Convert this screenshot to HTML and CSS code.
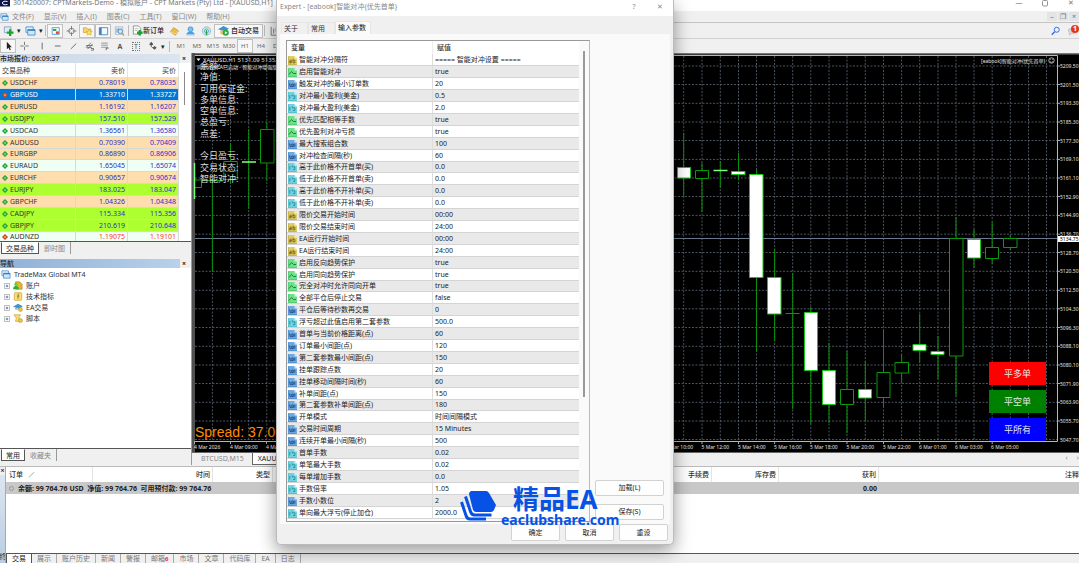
FILE: index.html
```html
<!DOCTYPE html>
<html lang="zh-CN">
<head>
<meta charset="utf-8">
<title>CPTMarkets-Demo - XAUUSD,H1</title>
<link rel="stylesheet" href="styles.css">
</head>
<body>
<svg class="defs" aria-hidden="true">
  <symbol id="i-ab" viewBox="0 0 9 9"><path d="M0 0h6.500l2.500 2.500V9H0z" fill="#e0cc62"/><path d="M6.500 0v2.500H9z" fill="#f8f0c0"/><path d="M.3.300v8.400h8.400" fill="none" stroke="#b39f3c" stroke-width=".6"/><path d="M1.500 4.200h1.800v2.600H1.600V5.500h1.700M5 2.700v4.100h1.900V4.400H5" fill="none" stroke="#6b5c14" stroke-width=".8"/></symbol>
  <symbol id="i-bo" viewBox="0 0 9 9"><path d="M0 0h6.500l2.500 2.500V9H0z" fill="#6fe08a"/><path d="M6.500 0v2.500H9z" fill="#d3f8dc"/><path d="M.3.300v8.400h8.400" fill="none" stroke="#41b862" stroke-width=".6"/><path d="M1 6.500l2.500-3L5.500 5.500h2.500" fill="none" stroke="#0f7a33" stroke-width=".9"/></symbol>
  <symbol id="i-in" viewBox="0 0 9 9"><path d="M0 0h6.500l2.500 2.500V9H0z" fill="#6ea9e0"/><path d="M6.500 0v2.500H9z" fill="#d0e4f8"/><path d="M.3.300v8.400h8.400" fill="none" stroke="#3f7cba" stroke-width=".6"/><path d="M1 4h1v2.600h1.400M3.800 4h1.500v2.600H3.800zM6.800 3.600v3.200" fill="none" stroke="#163f7c" stroke-width=".8"/></symbol>
  <symbol id="i-db" viewBox="0 0 9 9"><path d="M0 0h6.500l2.500 2.500V9H0z" fill="#70d3e0"/><path d="M6.500 0v2.500H9z" fill="#d0f4f8"/><path d="M.3.300v8.400h8.400" fill="none" stroke="#44aebd" stroke-width=".6"/><path d="M1.800 3v3.500M3.600 3h1.200v1.500M5 6.500h1.800V3.800H5.500" fill="none" stroke="#1b7885" stroke-width=".7"/></symbol>
  <symbol id="i-up" viewBox="0 0 6 6"><path d="M3 0l3 3-3 3-3-3z" fill="#1e9a34"/><path d="M3 1.500l1.500 1.500L3 4.500 1.500 3z" fill="#6fdc7c"/></symbol>
  <symbol id="i-dn" viewBox="0 0 6 6"><path d="M3 0l3 3-3 3-3-3z" fill="#c8401c"/><path d="M3 1.500l1.500 1.500L3 4.500 1.500 3z" fill="#ff8a5c"/></symbol>
  <symbol id="i-wins" viewBox="0 0 12 11"><path d="M1 1h8v6H1z" fill="#e4f2fd" stroke="#4b93d2"/><path d="M3 4h8v6H3z" fill="#cfe7fa" stroke="#4b93d2"/><path d="M3 4.500h8" stroke="#2f78ba" stroke-width="1.500"/></symbol>
  <symbol id="i-plus" viewBox="0 0 7 7"><path d="M.5.500h6v6h-6z" fill="#fff" stroke="#9a9a9a" stroke-width=".8"/><path d="M2 3.500h3M3.500 2v3" stroke="#345c9c" stroke-width=".9"/></symbol>
</svg>

<header class="titlebar">
  <svg class="app-icon" viewBox="0 0 10 7"><path d="M0 0h10v6.500H0z" fill="#0c1448"/><path d="M7.500 1.500q-5-1-5 1.500t5 1.500" fill="none" stroke="#fff" stroke-width="1"/></svg>
  <span class="title-text">301420007: CPTMarkets-Demo - 模拟账户 - CPT Markets (Pty) Ltd - [XAUUSD,H1]</span>
  <span class="win-controls"><button aria-label="最小化">—</button><button aria-label="最大化"><svg viewBox="0 0 8 8"><rect x="1.500" y=".5" width="5" height="5.500" rx="1" fill="none" stroke="#888" stroke-width=".9"/></svg></button><button aria-label="关闭">✕</button></span>
</header>
<nav class="menubar">
  <svg class="menu-icon"><use href="#i-wins"/></svg>
  <button>文件(F)</button><button>显示(V)</button><button>插入(I)</button><button>图表(C)</button><button>工具(T)</button><button>窗口(W)</button><button>帮助(H)</button>
  <span class="mdi"><button aria-label="最小化子窗口">–</button><button aria-label="还原子窗口">❐</button><button aria-label="关闭子窗口">×</button></span>
</nav>
<div class="toolbar">
  <button class="tool" aria-label="新建图表"><svg viewBox="0 0 12 12"><path d="M1 1h8v7H1z" fill="#dcebf8" stroke="#6d8eab" stroke-width=".8"/><path d="M4 8h8M8 4v8" stroke="#14a52c" stroke-width="2.800"/></svg></button><span class="caret">▾</span>
  <button class="tool" aria-label="配置"><svg><use href="#i-wins"/></svg></button><span class="caret">▾</span><i class="sep"></i>
  <button class="tool on" aria-label="市场报价"><svg viewBox="0 0 12 12"><path d="M2 2h8.500v8H2z" fill="#fff" stroke="#4a90d0"/><path d="M3 3.500h4v2.500H3z" fill="#25ae46"/><path d="M6.500 6.500H10v3H6.500z" fill="#e0492c"/></svg></button>
  <button class="tool" aria-label="十字"><svg viewBox="0 0 12 12"><circle cx="6" cy="6" r="3.300" fill="none" stroke="#707070"/><path d="M6 0v4.500M6 7.500V12M0 6h4.500M7.500 6H12" stroke="#707070"/></svg></button>
  <button class="tool on" aria-label="导航"><svg viewBox="0 0 12 12"><path d="M1 2h4l1 1.500h4V8H1z" fill="#f3d56b" stroke="#c7982c" stroke-width=".7"/><path d="M8 4l1.200 2.300 2.600.300-1.900 1.800.5 2.600L8 9.800 5.700 11l.5-2.600L4.300 6.600l2.600-.3z" fill="#ffe45e" stroke="#c7982c" stroke-width=".6"/></svg></button>
  <button class="tool on" aria-label="终端"><svg viewBox="0 0 12 12"><path d="M1 2h10v8.500H1z" fill="#f2f9ff" stroke="#3d7dbb"/><path d="M1 2h2.800v8.500H1z" fill="#3d7dbb"/></svg></button>
  <button class="tool" aria-label="策略测试"><svg viewBox="0 0 12 12"><path d="M1 1h9v9H1z" fill="#e8eef4" stroke="#95a9bc" stroke-width=".8"/><path d="M3 3v5M5 2.500V7M8 3v3" stroke="#5a7da0"/><circle cx="7" cy="6.500" r="2.600" fill="#cfe8fa" stroke="#4a88bc"/><path d="M9 8.500l2.500 3" stroke="#c99b33" stroke-width="1.400"/></svg></button><i class="sep"></i>
  <button class="wide"><svg viewBox="0 0 12 12"><path d="M1.500 1h5.500l2.500 2.500V10h-8z" fill="#fff" stroke="#777" stroke-width=".8"/><path d="M3 4h4M3 6h3" stroke="#999" stroke-width=".7"/><path d="M5.500 8.500h6M8.500 5.500v6" stroke="#14a52c" stroke-width="2.600"/></svg>新订单</button>
  <button class="tool" aria-label="MetaEditor"><svg viewBox="0 0 12 12"><path d="M1 7l4-5 6 4-4 5z" fill="#f2bd3d" stroke="#a8731a" stroke-width=".7"/><path d="M1 7l6 2.500L11 6" fill="none" stroke="#fff0b8" stroke-width=".8"/></svg></button>
  <button class="tool" aria-label="VPS"><svg viewBox="0 0 12 12"><circle cx="6" cy="4" r="3" fill="#7ac0f2" stroke="#2c78b8" stroke-width=".7"/><path d="M1 11q0-4 5-4t5 4z" fill="#4d9edf"/><path d="M1 10.500h10" stroke="#d4e9f8"/></svg></button>
  <button class="tool" aria-label="信号"><svg viewBox="0 0 12 12"><circle cx="6" cy="6" r="5" fill="#d4ebdf" stroke="#88b5d4"/><circle cx="6" cy="6" r="2.500" fill="none" stroke="#56a4c6"/><path d="M6 5v6" stroke="#21a04b" stroke-width="1.500"/></svg></button>
  <button class="wide on"><svg viewBox="0 0 12 12"><path d="M0 4.500L6 1l6 3-5 3z" fill="#3f94cc"/><path d="M2.500 6v3.500q3 2 6 0V6z" fill="#e7c565"/><circle cx="8.500" cy="8.500" r="3.300" fill="#23ac3c"/><path d="M7.500 6.800v3.400l3-1.700z" fill="#fff"/></svg>自动交易</button><i class="sep"></i>
  <button class="tool" aria-label="柱状图"><svg viewBox="0 0 12 12"><path d="M2 1v10h9M5 3v6M8 2v5" fill="none" stroke="#666"/></svg></button>
  <span class="right-tools">
    <button class="tool" aria-label="搜索"><svg viewBox="0 0 12 12"><circle cx="7.500" cy="4.500" r="3" fill="#e8f1ff" stroke="#3d6ddb" stroke-width="1.200"/><path d="M5 7L1.500 10.500" stroke="#3d6ddb" stroke-width="1.800"/></svg></button>
    <button class="tool chat" aria-label="通知"><svg viewBox="0 0 12 12"><path d="M1 4q5-3 9 0v4q-3 2-5 1l-3 2 .5-2.500Q1 8 1 4z" fill="#d8d8d8" stroke="#aaa" stroke-width=".6"/></svg><b class="badge">1</b></button>
  </span>
</div>
<div class="toolbar second">
  <button class="tool on" aria-label="光标"><svg viewBox="0 0 12 12"><path d="M4 1v9l2-2 1.500 3.200 1.300-.7L7.400 7.500H10z" fill="#222"/></svg></button>
  <button class="tool" aria-label="十字线"><svg viewBox="0 0 12 12"><path d="M6 1v4M6 7v4M1 6h4M7 6h4" stroke="#666"/></svg></button>
  <button class="tool" aria-label="垂直线"><svg viewBox="0 0 12 12"><path d="M8 2v8" stroke="#555"/></svg></button>
  <button class="tool" aria-label="水平线"><svg viewBox="0 0 12 12"><path d="M4 6h7" stroke="#555"/></svg></button>
  <button class="tool" aria-label="趋势线"><svg viewBox="0 0 12 12"><path d="M4 9.500L10.500 3" stroke="#555"/></svg></button>
  <button class="tool" aria-label="通道"><svg viewBox="0 0 12 12"><path d="M3 8l6-6M5 9.500l6-6M3 5.500h8M4 8h6M9 9h3v2H9" fill="none" stroke="#555" stroke-width=".9"/></svg></button>
  <button class="tool" aria-label="斐波那契"><svg viewBox="0 0 12 12"><path d="M2 2.500h8M2 5h8M2 7.500h8" stroke="#888"/><path d="M8 11V8.500h3" fill="none" stroke="#555"/></svg></button>
  <button class="tool letter">A</button>
  <button class="tool letter"><span class="boxed">T</span></button>
  <button class="tool" aria-label="箭头"><svg viewBox="0 0 12 12"><path d="M2 4l2.500-3L7 4 4.500 6zM6 8l2.500-2L11 8 8.500 10.500z" fill="#555"/><path d="M4 6l3 3" stroke="#555"/></svg></button><span class="caret">▾</span><i class="sep"></i>
  <button class="tool tf">M1</button><button class="tool tf">M5</button><button class="tool tf">M15</button><button class="tool tf">M30</button><button class="tool tf on">H1</button><button class="tool tf">H4</button><button class="tool tf">D1</button>
</div>

<main class="workspace">
  <aside class="dock">
    <section class="market">
      <h2 class="panel-title"><span>市场报价: 06:09:37</span><button aria-label="关闭市场报价">×</button></h2>
      <div class="quotes-wrap">
      <table class="quotes">
        <thead><tr><th>交易品种</th><th>卖价</th><th>买价</th></tr></thead>
        <tbody>
        <tr class="peach"><td><svg><use href="#i-up"/></svg>USDCHF</td><td>0.78019</td><td>0.78035</td></tr>
        <tr class="sel"><td><svg><use href="#i-dn"/></svg>GBPUSD</td><td>1.33710</td><td>1.33727</td></tr>
        <tr class="peach"><td><svg><use href="#i-up"/></svg>EURUSD</td><td>1.16192</td><td>1.16207</td></tr>
        <tr class="lime"><td><svg><use href="#i-up"/></svg>USDJPY</td><td>157.510</td><td>157.529</td></tr>
        <tr class="mint"><td><svg><use href="#i-up"/></svg>USDCAD</td><td>1.36561</td><td>1.36580</td></tr>
        <tr class="peach"><td><svg><use href="#i-up"/></svg>AUDUSD</td><td>0.70390</td><td>0.70409</td></tr>
        <tr class="peach"><td><svg><use href="#i-up"/></svg>EURGBP</td><td>0.86890</td><td>0.86906</td></tr>
        <tr class="mint"><td><svg><use href="#i-up"/></svg>EURAUD</td><td>1.65045</td><td>1.65074</td></tr>
        <tr class="peach"><td><svg><use href="#i-up"/></svg>EURCHF</td><td>0.90657</td><td>0.90674</td></tr>
        <tr class="lime"><td><svg><use href="#i-up"/></svg>EURJPY</td><td>183.025</td><td>183.047</td></tr>
        <tr class="peach"><td><svg><use href="#i-up"/></svg>GBPCHF</td><td>1.04326</td><td>1.04348</td></tr>
        <tr class="lime"><td><svg><use href="#i-up"/></svg>CADJPY</td><td>115.334</td><td>115.356</td></tr>
        <tr class="lime"><td><svg><use href="#i-up"/></svg>GBPJPY</td><td>210.619</td><td>210.648</td></tr>
        <tr class="mint down"><td><svg><use href="#i-dn"/></svg>AUDNZD</td><td>1.19075</td><td>1.19101</td></tr>
        </tbody>
      </table>
      <i class="thumb"></i>
      </div>
      <div class="dock-tabs"><button class="active">交易品种</button><button>即时图</button></div>
    </section>
    <section class="navigator">
      <h2 class="panel-title blue"><span>导航</span><button aria-label="关闭导航">×</button></h2>
      <ul class="tree">
        <li class="root"><svg class="ic"><use href="#i-wins"/></svg>TradeMax Global MT4</li>
        <li><svg class="ex"><use href="#i-plus"/></svg><svg class="ic" viewBox="0 0 12 11"><path d="M3 1h5l3 3v6H3z" fill="#e5b92f" stroke="#a07a12" stroke-width=".7"/><circle cx="3.500" cy="4" r="2" fill="#5ed04c"/><path d="M0 10q0-4 3.500-4T7 10z" fill="#2fae32"/></svg>账户</li>
        <li><svg class="ex"><use href="#i-plus"/></svg><svg class="ic" viewBox="0 0 12 11"><rect x="1.500" y=".8" width="9" height="9.400" rx="1" fill="#f7df74" stroke="#c79d2a" stroke-width=".8"/><path d="M7.500 2.500q-1.500-.5-1.500 1.500v4.500M4.800 5h3" fill="none" stroke="#7a5c10" stroke-width=".8"/></svg>技术指标</li>
        <li><svg class="ex"><use href="#i-plus"/></svg><svg class="ic" viewBox="0 0 12 11"><path d="M0 4.500L6 1l6 3-5 3z" fill="#3f94cc"/><path d="M2.500 5.500v2q2 1.500 4 0z" fill="#78bbe6"/><circle cx="9" cy="8" r="2.400" fill="#f0c63e" stroke="#a87e1a" stroke-width=".6"/></svg>EA交易</li>
        <li><svg class="ex"><use href="#i-plus"/></svg><svg class="ic" viewBox="0 0 12 11"><path d="M1 1h8l-2 4 3 4H3l1-4z" fill="#f7df74" stroke="#c79d2a" stroke-width=".8"/><circle cx="9" cy="8" r="2.400" fill="#f0c63e" stroke="#a87e1a" stroke-width=".6"/></svg>脚本</li>
      </ul>
      <div class="dock-tabs"><button class="active">常用</button><button>收藏夹</button></div>
    </section>
  </aside>

  <section class="chart-area">
    <div class="chart">
      <svg class="plot" viewBox="192 53 887 400" preserveAspectRatio="xMinYMin slice">
        <path d="M192 53h887v400H192z" fill="#000"/>
        <path d="M192 53h3v400h-3z" fill="#505050"/><path d="M195 53h884v1.500H195z" fill="#777"/>
        <g stroke="#5d6a78" stroke-width=".8" stroke-dasharray="2 1.500">
          <path d="M212.400 56v385M230.500 56v385M248.700 56v385M266.800 56v385M683.700 56v385M702 56v385M720.300 56v385M738.500 56v385M756.500 56v385M774.600 56v385M792.700 56v385M810.800 56v385M829 56v385M847 56v385M865.300 56v385M883.500 56v385M901.600 56v385M919.700 56v385M938 56v385M956 56v385M974 56v385M992.200 56v385M1010.300 56v385M1028.500 56v385M1046.500 56v385"/>
          <path d="M195 66h862M195 84.500h862M195 103.300h862M195 122h862M195 140.500h862M195 159.400h862M195 178h862M195 196.500h862M195 215.400h862M195 234.200h862M195 252.500h862M195 271.300h862M195 290.300h862M195 308.800h862M195 327.500h862M195 346.300h862M195 365h862M195 383.500h862M195 402.300h862M195 421h862M195 439.500h862"/>
        </g>
        <path d="M195 238.500h862" stroke="#6a7a8c"/>
        <path d="M195 55.500h862.500v386M195 441.500h862.500" fill="none" stroke="#b8b8b8"/>
        <path d="M230.500 441v3M266.500 441v3M194.500 441v3M702 441v3M738.500 441v3M774.600 441v3M810.800 441v3M847 441v3M883.500 441v3M919.700 441v3M956 441v3M992.200 441v3M1057 66h3M1057 84.500h3M1057 103.300h3M1057 122h3M1057 140.500h3M1057 159.400h3M1057 178h3M1057 196.500h3M1057 215.400h3M1057 234.200h3M1057 252.500h3M1057 271.300h3M1057 290.300h3M1057 308.800h3M1057 327.500h3M1057 346.300h3M1057 365h3M1057 383.500h3M1057 402.300h3M1057 421h3" stroke="#aaa"/>
        <path class="wick" d="M212.400 180v92M230.500 143v40M248.700 129v80M266.800 122v59M683.700 133v63M702 163v49M720.300 161v27M738.500 153v26M756.500 170v182M774.600 249v92M792.700 273v136M810.800 307v117M829 343v80M847 351v82M865.300 361v60M883.500 331v76M901.600 354v29M919.700 314v49M938 336v43M956 217v179M974 229v39M992.200 222v42M1010.300 235v15"/>
        <g class="hollow">
          <path d="M195 180h6.500v7.500H195M201.500 180.500h22M223.800 161.500h13.500v18h-13.500zM260.500 129.500h13.500v33.500h-13.500zM695.500 170.500h13v8h-13zM840.500 389.500h13v15h-13zM877 372.500h13v25h-13zM895 362.500h13.500v10.500H895zM949.500 238.500H963v117.500h-13.500zM985.500 247.500h13v11h-13zM1003.500 238.500H1017v9h-13.500zM785.500 313.500h14"/>
        </g>
        <path d="M194.500 163v36M242 162h14M713.500 170.500h14" stroke="#7dff7d" stroke-width="1.500"/>
        <g class="solid">
          <path d="M677.500 167.500h13v10.500h-13zM731.500 171.500H745v3h-13.500zM749.500 174.500H763v103h-13.500zM767.500 277.500H781v36.500h-13.500zM804.500 312.500h13v58h-13zM822.500 370.500h13v34h-13zM858.500 389.500h13v8.500h-13zM913 344.500h13v6H913zM931 351.500h13v3h-13zM967.500 239.500h13v18.500h-13z"/>
        </g>
        <path d="M196.500 58.500h4l-2 2.500z" fill="#fff"/>
        <g class="tiny">
          <text x="203" y="61.500" class="t6">XAUUSD,H1 5131.09 5135.57</text>
          <text x="197" y="69">同时对冲EA已启动 - 智能对冲增强版</text>
          <text x="981" y="62.500">[eabook]智能对冲{优先首单}</text>
        </g>
        <circle cx="1051.500" cy="60.500" r="2.700" fill="none" stroke="#ddd" stroke-width=".8"/><path d="M1050 61.500q1.500 1.500 3 0M1050.300 59.500h.8M1052 59.500h.8" fill="none" stroke="#ddd" stroke-width=".6"/>
        <g class="info">
          <text x="200" y="69">余额:</text><text x="200" y="80">净值:</text><text x="200" y="92">可用保证金:</text><text x="200" y="103">多单信息:</text><text x="200" y="114">空单信息:</text><text x="200" y="125">总盈亏:</text><text x="200" y="137">点差:</text><text x="200" y="159">今日盈亏:</text><text x="200" y="171">交易状态:</text><text x="200" y="182">智能对冲:</text>
        </g>
        <text x="195" y="437" class="spread">Spread: 37.00</text>
        <g class="tiny">
          <text x="194" y="448.500">4 Mar 2026</text><text x="230" y="448.500">4 Mar 09:00</text><text x="266" y="448.500">4 Mar 11:00</text><text x="665.500" y="448.500">5 Mar 10:00</text><text x="701.500" y="448.500">5 Mar 12:00</text><text x="738" y="448.500">5 Mar 14:00</text><text x="774" y="448.500">5 Mar 16:00</text><text x="810" y="448.500">5 Mar 18:00</text><text x="846.500" y="448.500">5 Mar 20:00</text><text x="883" y="448.500">5 Mar 22:00</text><text x="919" y="448.500">6 Mar 01:00</text><text x="955" y="448.500">6 Mar 03:00</text><text x="991" y="448.500">6 Mar 05:00</text>
          <text x="1060" y="68">5209.50</text><text x="1060" y="86.500">5201.50</text><text x="1060" y="105">5193.30</text><text x="1060" y="124">5185.30</text><text x="1060" y="142.500">5177.30</text><text x="1060" y="161">5169.10</text><text x="1060" y="180">5161.10</text><text x="1060" y="198.500">5152.90</text><text x="1060" y="217">5144.90</text><text x="1060" y="236">5136.70</text><text x="1060" y="254.500">5128.70</text><text x="1060" y="273">5120.50</text><text x="1060" y="292">5112.50</text><text x="1060" y="310.500">5104.30</text><text x="1060" y="329.500">5096.30</text><text x="1060" y="348">5088.10</text><text x="1060" y="367">5080.10</text><text x="1060" y="385.500">5071.90</text><text x="1060" y="404">5063.90</text><text x="1060" y="423">5055.70</text><text x="1060" y="441.500">5047.70</text>
        </g>
        <path d="M1058 236h21v6h-21z" fill="#fff"/><text x="1060" y="241" class="price">5134.75</text>
      </svg>
      <div class="close-buttons"><button class="red">平多单</button><button class="green">平空单</button><button class="navy">平所有</button></div>
    </div>
    <div class="chart-tabs"><button>BTCUSD,M15</button><button class="active">XAUUSD,H1</button><span class="scroll">‹ &#160; &#160; ›</span></div>
  </section>
</main>

<section class="terminal">
  <div class="strip"><button aria-label="关闭终端">×</button><i>终端</i></div>
  <div class="terminal-body">
    <table class="orders">
      <colgroup><col class="c1"><col class="c2"><col class="c3"><col class="c4"><col class="c5"><col class="c6"><col class="c7"></colgroup>
      <thead><tr><th class="l">订单 &#160; <small>∕</small></th><th>时间</th><th>类型</th><th>手续费</th><th>库存费</th><th>获利</th><th>注释</th></tr></thead>
      <tbody><tr><td colspan="5" class="l"><i class="dot"></i>余额: 99 764.76 USD&#160; 净值: 99 764.76&#160; 可用预付款: 99 764.76</td><td>0.00</td><td></td></tr></tbody>
    </table>
    <div class="term-tabs"><button class="active">交易</button><button>展示</button><button>账户历史</button><button>新闻</button><button>警报</button><button>邮箱<sub>6</sub></button><button>市场</button><button>文章</button><button>代码库</button><button>EA</button><button>日志</button></div>
  </div>
</section>

<div class="dialog" role="dialog" aria-labelledby="dlg-title">
  <header class="dlg-head"><span id="dlg-title">Expert - [eabook]智能对冲{优先首单}</span><span class="dlg-controls"><button aria-label="帮助">?</button><button aria-label="关闭">✕</button></span></header>
  <div class="dlg-tabs"><button>关于</button><button>常用</button><button class="active">输入参数</button></div>
  <div class="dlg-page">
    <div class="list-box">
      <table class="params">
        <thead><tr><th>变量</th><th>赋值</th></tr></thead>
        <tbody>
        <tr><td><svg><use href="#i-ab"/></svg>智能对冲分隔符</td><td>===== 智能对冲设置 =====</td></tr>
        <tr><td><svg><use href="#i-bo"/></svg>启用智能对冲</td><td>true</td></tr>
        <tr><td><svg><use href="#i-in"/></svg>触发对冲的最小订单数</td><td>20</td></tr>
        <tr><td><svg><use href="#i-db"/></svg>对冲最小盈利(美金)</td><td>0.5</td></tr>
        <tr><td><svg><use href="#i-db"/></svg>对冲最大盈利(美金)</td><td>2.0</td></tr>
        <tr><td><svg><use href="#i-bo"/></svg>优先匹配相等手数</td><td>true</td></tr>
        <tr><td><svg><use href="#i-bo"/></svg>优先盈利对冲亏损</td><td>true</td></tr>
        <tr><td><svg><use href="#i-in"/></svg>最大搜索组合数</td><td>100</td></tr>
        <tr><td><svg><use href="#i-in"/></svg>对冲检查间隔(秒)</td><td>60</td></tr>
        <tr><td><svg><use href="#i-db"/></svg>高于此价格不开首单(买)</td><td>0.0</td></tr>
        <tr><td><svg><use href="#i-db"/></svg>低于此价格不开首单(卖)</td><td>0.0</td></tr>
        <tr><td><svg><use href="#i-db"/></svg>高于此价格不开补单(买)</td><td>0.0</td></tr>
        <tr><td><svg><use href="#i-db"/></svg>低于此价格不开补单(卖)</td><td>0.0</td></tr>
        <tr><td><svg><use href="#i-ab"/></svg>限价交易开始时间</td><td>00:00</td></tr>
        <tr><td><svg><use href="#i-ab"/></svg>限价交易结束时间</td><td>24:00</td></tr>
        <tr><td><svg><use href="#i-ab"/></svg>EA运行开始时间</td><td>00:00</td></tr>
        <tr><td><svg><use href="#i-ab"/></svg>EA运行结束时间</td><td>24:00</td></tr>
        <tr><td><svg><use href="#i-bo"/></svg>启用反向趋势保护</td><td>true</td></tr>
        <tr><td><svg><use href="#i-bo"/></svg>启用同向趋势保护</td><td>true</td></tr>
        <tr><td><svg><use href="#i-bo"/></svg>完全对冲时允许同向开单</td><td>true</td></tr>
        <tr><td><svg><use href="#i-bo"/></svg>全部平仓后停止交易</td><td>false</td></tr>
        <tr><td><svg><use href="#i-in"/></svg>平仓后等待秒数再交易</td><td>0</td></tr>
        <tr><td><svg><use href="#i-db"/></svg>浮亏超过此值启用第二套参数</td><td>500.0</td></tr>
        <tr><td><svg><use href="#i-in"/></svg>首单与当前价格距离(点)</td><td>60</td></tr>
        <tr><td><svg><use href="#i-in"/></svg>订单最小间距(点)</td><td>120</td></tr>
        <tr><td><svg><use href="#i-in"/></svg>第二套参数最小间距(点)</td><td>150</td></tr>
        <tr><td><svg><use href="#i-in"/></svg>挂单跟踪点数</td><td>20</td></tr>
        <tr><td><svg><use href="#i-in"/></svg>挂单移动间隔时间(秒)</td><td>60</td></tr>
        <tr><td><svg><use href="#i-in"/></svg>补单间距(点)</td><td>150</td></tr>
        <tr><td><svg><use href="#i-in"/></svg>第二套参数补单间距(点)</td><td>180</td></tr>
        <tr><td><svg><use href="#i-in"/></svg>开单模式</td><td>时间间隔模式</td></tr>
        <tr><td><svg><use href="#i-in"/></svg>交易时间周期</td><td>15 Minutes</td></tr>
        <tr><td><svg><use href="#i-in"/></svg>连续开单最小间隔(秒)</td><td>500</td></tr>
        <tr><td><svg><use href="#i-db"/></svg>首单手数</td><td>0.02</td></tr>
        <tr><td><svg><use href="#i-db"/></svg>单笔最大手数</td><td>0.02</td></tr>
        <tr><td><svg><use href="#i-db"/></svg>每单增加手数</td><td>0.0</td></tr>
        <tr><td><svg><use href="#i-db"/></svg>手数倍率</td><td>1.05</td></tr>
        <tr><td><svg><use href="#i-in"/></svg>手数小数位</td><td>2</td></tr>
        <tr><td><svg><use href="#i-db"/></svg>单向最大浮亏(停止加仓)</td><td>2000.0</td></tr>
        </tbody>
      </table>
      <i class="thumb"></i>
    </div>
    <div class="side"><button class="btn">加载(L)</button><button class="btn">保存(S)</button></div>
  </div>
  <footer class="dlg-foot"><button class="btn">确定</button><button class="btn">取消</button><button class="btn">重设</button></footer>
  <div class="watermark">
    <svg viewBox="0 0 36 31"><path d="M11 1h15q2 0 3 2l7 12-2 5q-1 2-3 2H16q-2 0-3-2L9 4q0-2 2-3z" fill="#0752e4"/><path d="M5.500 6.500l5 15q1 3.500 4 3.500h17M1.500 12l4.500 13.500q1 3.500 4 3.500h16" fill="none" stroke="#0752e4" stroke-width="3"/></svg>
    <div><strong>精品EA</strong><em>eaclubshare.com</em></div>
  </div>
</div>
</body>
</html>
```
FILE: styles.css
```css
* { box-sizing: border-box; }
html, body { margin: 0; height: 100%; }
body {
  display: flex; flex-direction: column; overflow: hidden;
  min-height: 100vh; background: #f0f0f0; color: #333;
  font: 7px/11px "Noto Sans", "Noto Sans CJK SC", sans-serif;
  position: relative;
}
button { font: inherit; color: inherit; border: 0; background: none; padding: 0; margin: 0; white-space: nowrap; }
svg { display: block; flex: none; }
.defs { position: absolute; width: 0; height: 0; }

/* Title and menu */
.titlebar { display: flex; flex: 0 0 11px; background: #fff; color: #777; line-height: 5px; }
.app-icon { width: 10px; height: 7px; margin-right: 3px; }
.title-text { white-space: nowrap; }
.win-controls { margin-left: auto; display: flex; align-items: flex-start; gap: 12px; padding-right: 1px; }
.win-controls button { width: 14px; }
.win-controls svg { width: 8px; height: 8px; margin: 0 auto; }
.menubar { display: flex; flex: 0 0 12px; align-items: center; gap: 10px; border-bottom: 1px solid #c4c4c4; color: #8a8a8a; }
.menu-icon { width: 9px; height: 8px; margin-right: -7px; }
.mdi { margin-left: auto; display: flex; gap: 1px; color: #5b7290; }
.mdi button { width: 10px; background: #e4e4e4; line-height: 9px; }

/* Toolbars */
.toolbar { display: flex; flex: 0 0 16px; align-items: center; border-bottom: 1px solid #d2d2d2; }
.toolbar.second { flex-basis: 14px; border-bottom: 0; }
.tool { width: 16px; height: 14px; display: flex; align-items: center; justify-content: center; border: 1px solid transparent; }
.tool svg { width: 11px; height: 10px; }
.toolbar .on { border: 1px solid #c0c0c0; background: #f8f8f8; }
.caret { width: 6px; text-align: center; color: #222; }
.sep { width: 1px; height: 11px; background: #bbb; margin: 0 1px; }
.second .sep { margin: 0 3px; }
.wide { display: flex; align-items: center; height: 14px; gap: 0; padding: 0 1px; border: 1px solid transparent; color: #222; font-weight: 500; }
.wide svg { width: 11px; height: 11px; }
.wide.on { padding: 0 3px; gap: 2px; }
.letter { font-weight: 700; color: #555; }
.boxed { border: 1px dotted #777; line-height: 7px; width: 8px; font-weight: 400; }
.tf { font-size: 6px; color: #666; }
.right-tools { margin-left: auto; display: flex; gap: 2px; }
.chat { position: relative; width: 14px; }
.badge { position: absolute; right: -1px; top: 0; width: 8px; height: 8px; border-radius: 4px; background: #e03a1e; color: #fff; line-height: 8px; }

/* Docked panels */
.workspace { flex: 1; min-height: 0; display: flex; }
.dock { flex: 0 0 192px; display: flex; flex-direction: column; border-right: 1px solid #999; }
.market { flex: none; }
.navigator { flex: 1; display: flex; flex-direction: column; margin-top: 4px; padding-bottom: 4px; }
.panel-title { display: flex; align-items: center; justify-content: space-between; margin: 0; padding-right: 3px; height: 10px; font-size: 7px; font-weight: 500; line-height: 9px; color: #222; }
.panel-title span { flex: 1; background: linear-gradient(90deg, #ccd8e6, #dbe5f0); }
.panel-title.blue span { background: linear-gradient(90deg, #8fb0d6, #b9d1ea); }
.panel-title button { width: 8px; font-weight: 700; }
.quotes-wrap { position: relative; height: 179px; overflow: hidden; background: #fff; border-bottom: 1px solid #555; }
.quotes { width: 179px; border-spacing: 0; table-layout: fixed; line-height: 11px; }
.quotes th { height: 14px; padding: 0 2px; font-weight: 400; text-align: right; border-right: 1px solid #e4e4e4; }
.quotes th:first-child { width: 76px; text-align: left; }
.quotes th:nth-child(2) { width: 52px; }
.quotes td { padding: 0 2px; height: 12px; text-align: right; border-bottom: 1px solid #d8d8d8; border-right: 1px solid #d8d8d8; color: #2c2ccc; }
.quotes tr:nth-child(7n) td { height: 11px; line-height: 10px; }
.quotes td:first-child { text-align: left; color: #333; }
.quotes td svg { width: 6px; height: 6px; display: inline-block; vertical-align: middle; margin-right: 2px; }
.quotes .peach { background: #ffdead; }
.quotes .lime { background: #adff2f; }
.quotes .mint { background: #f0fff4; }
.quotes .sel { background: #0078d7; }
.quotes .sel td, .quotes .sel td:first-child { color: #fff; }
.quotes .down td:not(:first-child) { color: #ff3b30; }
.quotes-wrap .thumb { position: absolute; left: 184px; top: 9px; width: 1px; height: 33px; background: #888; }
.dock-tabs { display: flex; height: 12px; padding-left: 1px; color: #888; }
.dock-tabs button { padding: 0 5px; height: 12px; line-height: 11px; border-right: 1px solid #999; }
.dock-tabs .active { padding: 0 4px; background: #fff; color: #222; border: 1px solid #555; border-top-color: #fff; }
.tree { flex: 1; list-style: none; margin: 0; padding: 1px 0 0; background: #fff; border-bottom: 1px solid #555; }
.tree li { display: flex; align-items: center; height: 11px; padding-left: 4px; gap: 3px; color: #333; }
.tree .root { padding-left: 1px; }
.tree .ex { width: 6px; height: 6px; }
.tree .ic { width: 10px; height: 9px; }

/* Chart */
.chart-area { flex: 1; min-width: 0; display: flex; flex-direction: column; }
.chart { flex: 1; min-height: 0; position: relative; background: #000; border-bottom: 1px solid #666; overflow: hidden; }
.plot { width: 100%; height: 100%; }
.wick { stroke: #089008; stroke-width: 1; fill: none; }
.hollow { fill: #000; stroke: #0a9a0a; stroke-width: 1; }
.solid { fill: #fff; stroke: #18c818; stroke-width: 1; }
.tiny { fill: #e4e4e4; font-size: 5px; }
.t6 { font-size: 6px; }
.price { fill: #000; font-size: 5px; }
.info { fill: #dcdcdc; font-size: 9px; }
.spread { fill: #ff8c00; font: 14px "Liberation Sans", sans-serif; }
.close-buttons { position: absolute; right: 33px; bottom: 11px; width: 57px; display: grid; gap: 5px; }
.close-buttons button { height: 23px; color: #e6e6e6; font-size: 9px; }
.close-buttons .red { background: #f00; }
.close-buttons .green { background: #008000; }
.close-buttons .navy { background: #00f; }
.chart-tabs { flex: 0 0 12px; display: flex; padding-left: 1px; color: #888; line-height: 10px; }
.chart-tabs button { padding: 0 8px; }
.chart-tabs .active { background: #fff; color: #222; border: 1px solid #666; border-top: 0; padding: 0 5px; }
.scroll { margin-left: auto; }

/* Terminal */
.terminal { flex: 0 0 97px; display: flex; border-top: 1px solid #bbb; margin-top: 1px; }
.strip { flex: 0 0 6px; display: flex; flex-direction: column; justify-content: space-between; overflow: hidden; background: linear-gradient(#dfe8f2, #b9cde2); border-right: 1px solid #aaa; }
.strip button { background: #f0f0f0; font-weight: 700; line-height: 8px; }
.strip i { writing-mode: vertical-rl; font-style: normal; line-height: 6px; height: 10px; overflow: hidden; }
.terminal-body { flex: 1; min-width: 0; display: flex; flex-direction: column; background: #fff; }
.orders { width: 100%; table-layout: fixed; border-spacing: 0; line-height: 11px; }
.c1 { width: 87px; }
.c2 { width: 120px; }
.c3 { width: 60px; }
.c5 { width: 67px; }
.c6 { width: 100px; }
.c7 { width: 200px; }
.orders th { height: 15px; padding: 0 2px; text-align: right; font-weight: 500; border-right: 1px solid #e4e4e4; }
.orders td { height: 12px; padding: 0 2px; text-align: right; font-weight: 700; color: #222; background: #c8c8c8; white-space: nowrap; }
.orders .l { text-align: left; padding-left: 3px; }
.orders th:last-child { padding-right: 0; border: 0; }
.dot { display: inline-block; width: 5px; height: 5px; border: 1px solid #999; border-radius: 3px; margin-right: 4px; }
.term-tabs { margin-top: auto; flex: 0 0 10px; display: flex; background: #f0f0f0; border-top: 1px solid #555; color: #777; line-height: 10px; overflow: hidden; }
.term-tabs button { padding: 0 5px; border-right: 1px solid #aaa; height: 10px; }
.term-tabs .active { background: #fff; color: #222; border: 1px solid #555; border-top: 0; }
.term-tabs sub { color: #f23; font-size: 6px; line-height: 5px; font-weight: 700; vertical-align: baseline; }

/* Expert dialog */
.dialog {
  position: absolute; left: 276px; top: 0; width: 398px; height: 545px;
  display: flex; flex-direction: column; background: #f0f0f0;
  border: 1px solid #bbb; border-top: 0; border-radius: 0 0 5px 5px;
  box-shadow: 0 6px 18px rgba(0, 0, 0, .4);
}
.dlg-head { flex: 0 0 16px; display: flex; background: #fff; color: #888; padding: 1px 8px 0 3px; }
.dlg-controls { margin-left: auto; display: flex; align-items: flex-start; gap: 16px; }
.dlg-controls button { width: 10px; }
.dlg-tabs { display: flex; flex: 0 0 18px; align-items: flex-end; padding-left: 4px; color: #333; }
.dlg-tabs button { width: 27px; height: 12px; padding: 0 2px; text-align: left; border: 1px solid #e6e6e6; border-bottom: 0; line-height: 12px; }
.dlg-tabs .active { width: 36px; height: 13px; background: #fafafa; color: #111; }
.dlg-page { flex: 1; min-height: 0; margin: 0 3px; padding: 6px 6px 2px; display: flex; gap: 5px; background: #fafafa; }
.list-box { flex: 1; position: relative; overflow: hidden; background: #fafafa; border: 1px solid #999; border-right-color: #bbb; }
.list-box .thumb { position: absolute; right: 4px; top: 10px; width: 2px; height: 346px; background: #999; }
.params { width: 292px; border-spacing: 0; table-layout: fixed; line-height: 11px; background: #fff; }
.params th { height: 13px; padding: 0 4px; font-weight: 500; text-align: left; }
.params th:first-child { width: 146px; border-right: 1px solid #eee; }
.params td { height: 12px; padding: 0 2px; border-bottom: 1px solid #d4d4d4; white-space: nowrap; color: #222; }
.params td:first-child { padding: 0 1px; border-right: 1px solid #ddd; }
.params tr:nth-child(10n) td { height: 11px; line-height: 10px; }
.params tbody tr:nth-child(even) { background: #e9e9e9; }
.params td svg { display: inline-block; vertical-align: middle; width: 9px; height: 9px; margin-right: 2px; }
.side { flex: 0 0 69px; display: flex; flex-direction: column; justify-content: flex-end; gap: 8px; padding-bottom: 2px; }
.btn { height: 16px; background: #fefefe; border: 1px solid #d2d2d2; border-radius: 2px; line-height: 14px; color: #222; }
.dlg-foot { flex: 0 0 20px; display: flex; justify-content: flex-end; gap: 5px; padding-right: 5px; }
.dlg-foot .btn { width: 49px; height: 17px; }
.watermark { position: absolute; left: 183px; top: 485px; display: flex; gap: 5px; color: #0752e4; pointer-events: none; }
.watermark svg { width: 36px; height: 31px; margin-top: 5px; }
.watermark div { display: flex; flex-direction: column; }
.watermark strong { padding-left: 12px; font-size: 26px; line-height: 28px; }
.watermark em { font-style: normal; font-weight: 700; font-size: 14px; line-height: 13px; }
```
